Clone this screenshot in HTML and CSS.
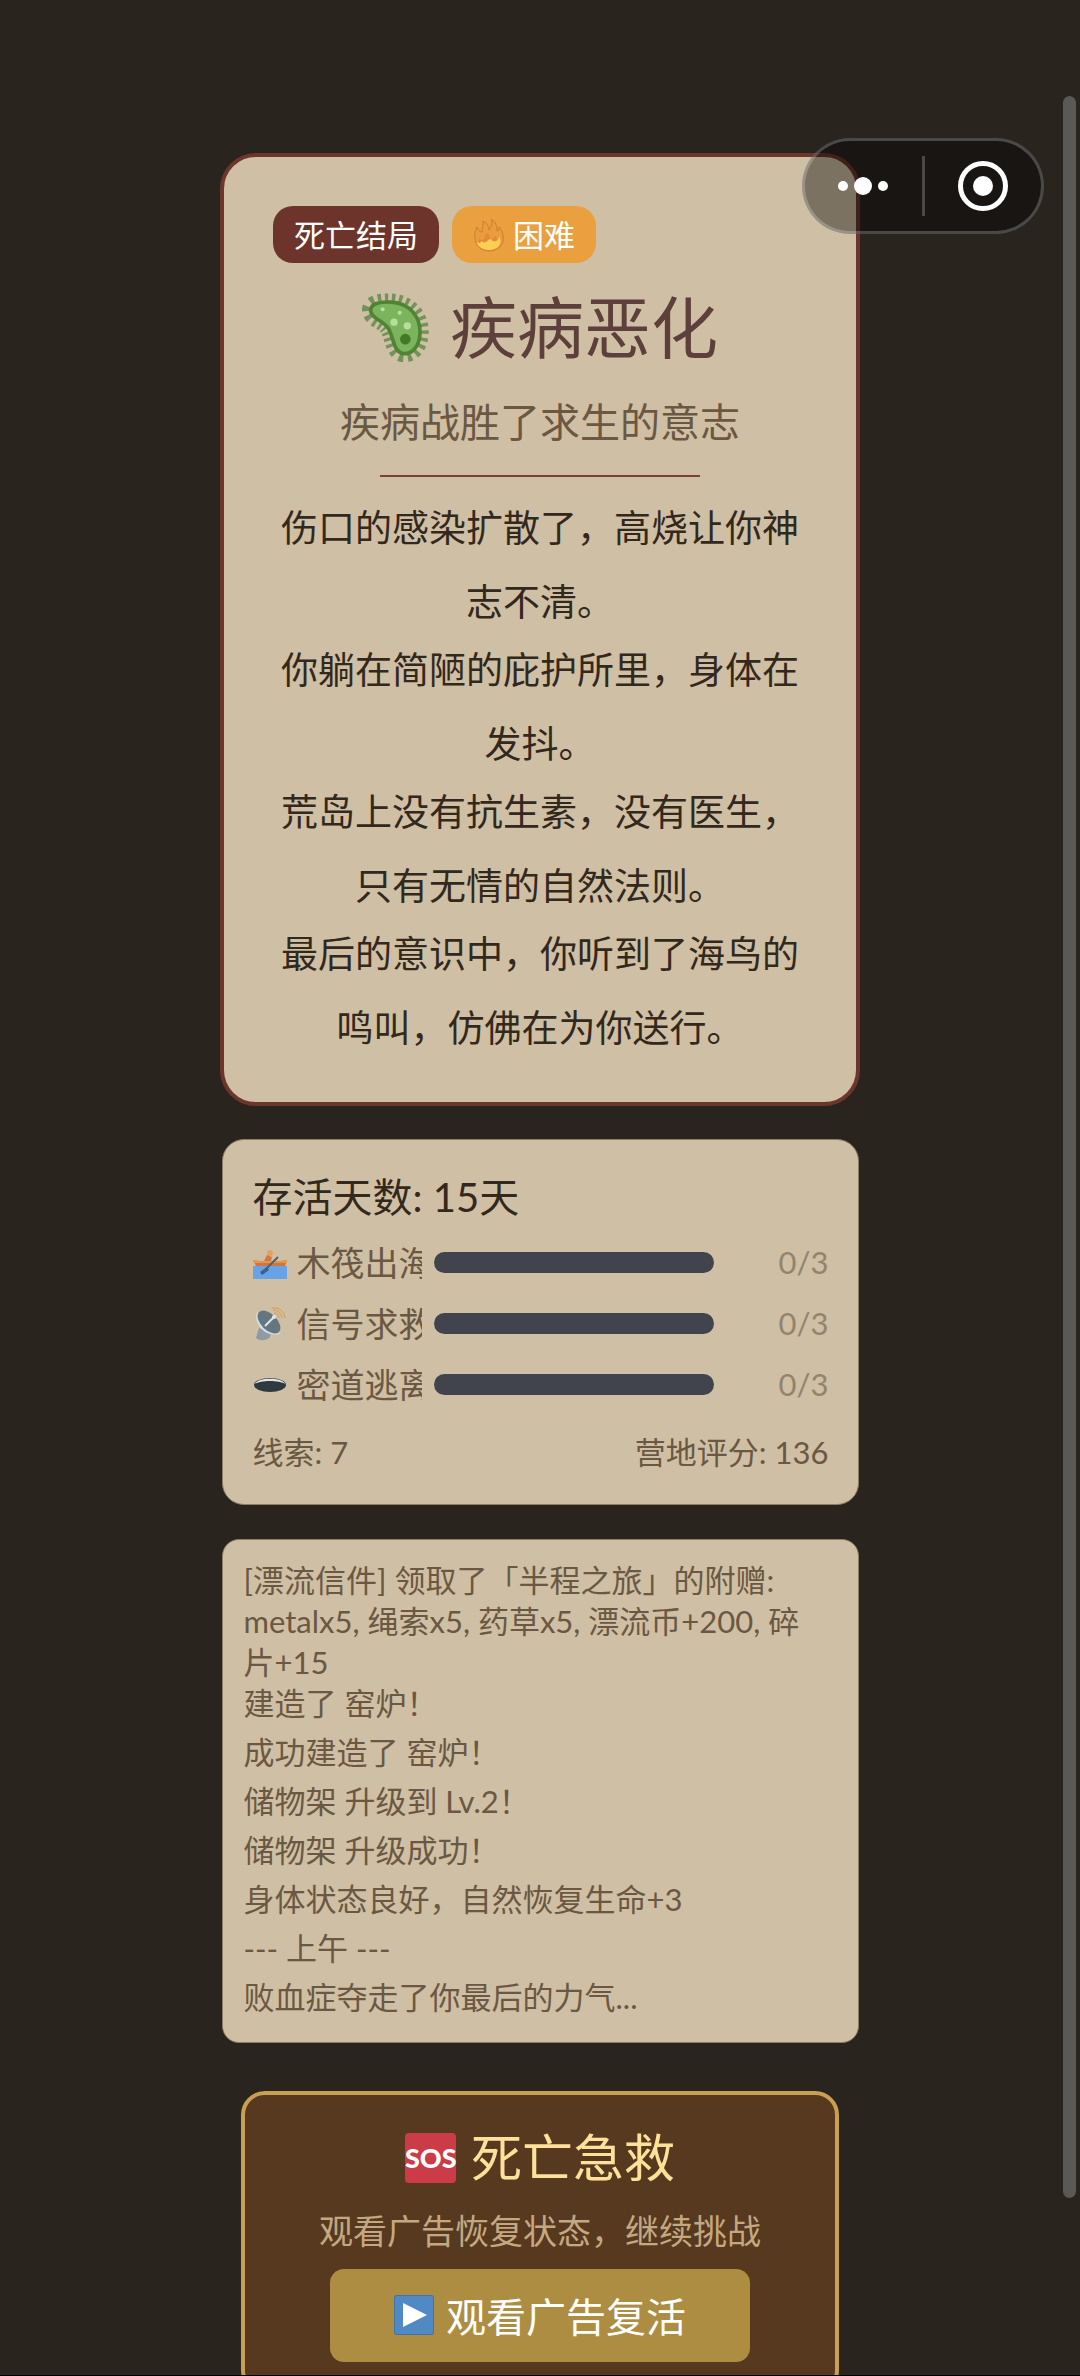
FILE: index.html
```html
<!DOCTYPE html>
<html lang="zh-CN">
<head>
<meta charset="utf-8">
<meta name="viewport" content="width=device-width, initial-scale=1">
<title>疾病恶化</title>
<link rel="stylesheet" href="styles.css">
</head>
<body>
<div class="app">
  <main class="screen">
    <article class="card ending">
      <div class="badges">
        <span class="badge badge-death">死亡结局</span>
        <span class="badge badge-hard">
          <svg class="badge-icon" viewBox="0 0 31 34" aria-hidden="true">
            <path d="M2 20C1 15 3 12 4 9c1 3 3 5 5 5C9 9 11 5 10 3c4 2 6 6 6 9 2-3 4-7 2-11 5 3 6 7 6 12 2 0 2-2 2-4 3 3 5 9 4 14-1 6-7 10-14 10S2 28 2 20z" fill="#e99d3f" stroke="#c98034" stroke-width="1"/>
            <path d="M9 22c2 0 2-4 5-7 3 2 3 6 5 6 2-1 2-3 4-3 1 4 2 8-1 11-4 3-11 3-14 0-2-2-3-6-2-10 1 1 1 3 3 3z" fill="#e58b35"/>
            <path d="M4 24c2 2 4 1 4-1 2 1 3 2 5 1 2-2 3-3 5-3 1 2 3 3 5 2 2 0 3-3 3-5 2 4 2 8-1 11-5 4-13 4-18 0-2-1-3-3-3-5z" fill="#fbcf55"/>
          </svg>困难</span>
      </div>
      <h1 class="ending-title">
        <svg class="title-icon" viewBox="36 36 204 212" aria-hidden="true">
          <path d="M62 92C60 70 90 64 125 66C180 70 212 110 210 160C208 200 185 224 158 220C132 214 132 180 118 150C105 120 64 118 62 92Z" fill="none" stroke="#74925c" stroke-width="52" stroke-dasharray="9 10"/>
          <path d="M62 92C60 70 90 64 125 66C180 70 212 110 210 160C208 200 185 224 158 220C132 214 132 180 118 150C105 120 64 118 62 92Z" fill="#7cb35d" stroke="#4f8433" stroke-width="11"/>
          <circle cx="98" cy="87" r="6" fill="#b5e09b"/>
          <circle cx="149" cy="98" r="6" fill="#b5e09b"/>
          <circle cx="132" cy="126" r="11" fill="#b5e09b"/>
          <circle cx="172" cy="137" r="11" fill="#b5e09b"/>
          <circle cx="166" cy="177" r="16" fill="#427a27"/>
        </svg>疾病恶化</h1>
      <p class="ending-subtitle">疾病战胜了求生的意志</p>
      <hr class="divider">
      <div class="story">
        <p>伤口的感染扩散了，高烧让你神志不清。</p>
        <p>你躺在简陋的庇护所里，身体在发抖。</p>
        <p>荒岛上没有抗生素，没有医生，只有无情的自然法则。</p>
        <p>最后的意识中，你听到了海鸟的鸣叫，仿佛在为你送行。</p>
      </div>
    </article>

    <section class="card panel stats">
      <h2 class="stats-title">存活天数: 15天</h2>
      <div class="routes">
        <div class="route">
          <label class="route-label" for="route-raft">
            <svg class="route-icon" viewBox="0 0 34 34" aria-hidden="true">
              <path d="M0 20h34v13H0z" fill="#68a3e5"/>
              <path d="M0 14c10 2 22 2 34 0l-2 6H3z" fill="#cf7640"/>
              <path d="M0 14c10 2 22 2 34 0v3H1z" fill="#e8944c"/>
              <circle cx="17" cy="7" r="3" fill="#e8a05c"/>
              <path d="M11 15l3-6 5 2-1 4z" fill="#d6763e"/>
              <path d="M25 11L13 23" stroke="#51606f" stroke-width="2"/>
              <path d="M14 21l-7 5 2 3 7-5z" fill="#38618d"/>
            </svg><span>木筏出海</span></label>
          <progress class="route-bar" id="route-raft" value="0" max="3"></progress>
          <span class="route-count">0/3</span>
        </div>
        <div class="route">
          <label class="route-label" for="route-signal">
            <svg class="route-icon" viewBox="0 0 34 34" aria-hidden="true">
              <path d="M6 21l-3 10c3 3 11 3 14-1l1-5z" fill="#8e9ba5"/>
              <path d="M4 5C0 15 11 31 27 27z" fill="#d3dde6"/>
              <ellipse cx="16" cy="15" rx="14" ry="8" transform="rotate(45 16 15)" fill="#667680"/>
              <path d="M12 19l9-9" stroke="#dfe6ea" stroke-width="2"/>
              <circle cx="21" cy="10" r="2" fill="#dfe6ea"/>
              <path d="M21 6c3 0 5 2 5 5M20 3c5 0 8 3 9 8M19 1c7-1 12 3 13 10" fill="none" stroke="#dd9a45" stroke-width="1"/>
            </svg><span>信号求救</span></label>
          <progress class="route-bar" id="route-signal" value="0" max="3"></progress>
          <span class="route-count">0/3</span>
        </div>
        <div class="route">
          <label class="route-label" for="route-tunnel">
            <svg class="route-icon" viewBox="0 0 34 34" aria-hidden="true">
              <ellipse cx="17" cy="17" rx="16" ry="7" fill="#303940"/>
              <path d="M2 16c2-7 28-7 30 0-5-4-25-4-30 0z" fill="#dfe5e8"/>
            </svg><span>密道逃离</span></label>
          <progress class="route-bar" id="route-tunnel" value="0" max="3"></progress>
          <span class="route-count">0/3</span>
        </div>
      </div>
      <div class="stats-footer">
        <span>线索: 7</span>
        <span>营地评分: 136</span>
      </div>
    </section>

    <section class="card panel log">
      <p class="log-long">[漂流信件] 领取了「半程之旅」的附赠: metalx5, 绳索x5, 药草x5, 漂流币+200, 碎片+15</p>
      <ul class="log-list">
        <li>建造了 窑炉！</li>
        <li>成功建造了 窑炉！</li>
        <li>储物架 升级到 Lv.2！</li>
        <li>储物架 升级成功！</li>
        <li>身体状态良好，自然恢复生命+3</li>
        <li>--- 上午 ---</li>
        <li>败血症夺走了你最后的力气...</li>
      </ul>
    </section>

    <section class="rescue">
      <h2 class="rescue-title"><span class="sos">SOS</span>死亡急救</h2>
      <p class="rescue-text">观看广告恢复状态，继续挑战</p>
      <button class="rescue-button" type="button">
        <svg class="play-icon" viewBox="0 0 40 40" aria-hidden="true">
          <rect width="40" height="40" rx="3" fill="#3f74ab"/>
          <rect x="1" y="1" width="38" height="38" rx="2" fill="#5089c4"/>
          <path d="M9 8l24 12L9 32z" fill="#fff"/>
        </svg>观看广告复活</button>
    </section>
  </main>

  <div class="capsule">
    <button class="capsule-button" type="button" aria-label="更多">
      <svg class="dots" viewBox="0 0 52 20" aria-hidden="true">
        <circle cx="6" cy="10" r="5"/><circle cx="26" cy="10" r="9"/><circle cx="46" cy="10" r="5"/>
      </svg>
    </button>
    <button class="capsule-button capsule-close" type="button" aria-label="关闭">
      <svg class="ring" viewBox="0 0 50 50" aria-hidden="true">
        <circle cx="25" cy="25" r="22.500" fill="none" stroke="#fff" stroke-width="5"/>
        <circle cx="25" cy="25" r="10"/>
      </svg>
    </button>
  </div>
  <div class="scroll-thumb"></div>
</div>
</body>
</html>
```
FILE: styles.css
```css
* {
  box-sizing: border-box;
}

body,
h1,
h2,
p,
ul {
  margin: 0;
  padding: 0;
  font-weight: 400;
}

body {
  background: #29241e;
  color: #33281c;
  font-family: Lato, "Noto Sans CJK SC", sans-serif;
}

button {
  border: 0;
  padding: 0;
  background: none;
  font: inherit;
  color: #fff;
  cursor: pointer;
}

.app {
  position: relative;
  height: 100vh;
  overflow: hidden;
  border-bottom: 1px solid #000;
}

.screen {
  display: flex;
  flex-direction: column;
  align-items: center;
  padding-top: 153px;
}

.card {
  width: 100%;
  background: #cfbfa4;
}

/* Ending card */
.ending {
  max-width: 640px;
  padding: 49px 49px 37px;
  border: 4px solid #6d362c;
  border-radius: 36px;
  text-align: center;
}

.badges {
  display: flex;
  gap: 13px;
}

.badge {
  display: flex;
  align-items: center;
  height: 57px;
  padding: 0 21px;
  border-radius: 20px;
  color: #fff;
  font-size: 31px;
  line-height: 56px;
}

.badge-death {
  background: #6d342b;
}

.badge-hard {
  background: #eaa03e;
}

.badge-icon {
  width: 31px;
  height: 34px;
  margin-right: 9px;
}

.ending-title {
  display: flex;
  align-items: center;
  justify-content: center;
  gap: 20px;
  margin-top: 20px;
  color: #5d403b;
  font-size: 67px;
  line-height: 88px;
}

.title-icon {
  width: 68px;
  height: 71px;
}

.ending-subtitle {
  margin-top: 23px;
  color: #6a5842;
  font-size: 40px;
  line-height: 56px;
}

.divider {
  width: 60%;
  max-width: 320px;
  height: 2px;
  margin: 25px auto 14px;
  border: 0;
  background: #7a4032;
}

.story p {
  font-size: 37px;
  line-height: 74px;
}

.story p + p {
  margin-top: -6px;
}

/* Panels */
.panel {
  max-width: 637px;
  border: 1px solid #8d7d66;
}

.stats {
  margin-top: 33px;
  padding: 30px 29px 30px 30px;
  border-radius: 22px;
}

.stats-title {
  font-size: 40px;
  line-height: 54px;
}

.routes {
  display: grid;
  gap: 10px;
  margin-top: 13px;
}

.route {
  display: flex;
  align-items: center;
  height: 51px;
  font-size: 34px;
  line-height: 51px;
}

.route-label {
  display: flex;
  align-items: center;
  gap: 10px;
  width: 169px;
  margin-right: 12px;
  overflow: hidden;
  color: #6a5842;
  white-space: nowrap;
}

.route-icon {
  flex: none;
  width: 34px;
  height: 34px;
}

.route-bar {
  width: 280px;
  height: 21px;
  appearance: none;
  border: 0;
  border-radius: 11px;
  overflow: hidden;
  background: #41444d;
}

.route-bar::-webkit-progress-bar {
  background: #41444d;
}

.route-bar::-webkit-progress-value {
  background: #c9a050;
}

.route-count {
  margin-left: auto;
  color: #94846c;
  font-size: 31px;
}

.stats-footer {
  display: flex;
  justify-content: space-between;
  margin-top: 20px;
  color: #6a5842;
  font-size: 31px;
  line-height: 44px;
}

.log {
  margin-top: 34px;
  padding: 20px 36px 24px 21px;
  border-radius: 17px;
  color: #6a5842;
  font-size: 31px;
  line-height: 41px;
}

.log-list {
  display: grid;
  gap: 8px;
  list-style: none;
}

/* Rescue offer */
.rescue {
  display: flex;
  flex-direction: column;
  align-items: center;
  width: 100%;
  max-width: 598px;
  margin-top: 48px;
  padding: 28px 20px;
  border: 4px solid #c99f50;
  border-radius: 24px;
  background: #56391e;
}

.rescue-title {
  display: flex;
  align-items: center;
  gap: 15px;
  color: #fde09a;
  font-size: 51px;
  line-height: 70px;
}

.sos {
  width: 51px;
  height: 50px;
  border-radius: 4px;
  background: #cb3c48;
  color: #fff;
  font-size: 27px;
  font-weight: 900;
  line-height: 50px;
  text-align: center;
}

.rescue-text {
  margin-top: 15px;
  color: #c4a882;
  font-size: 34px;
  line-height: 46px;
}

.rescue-button {
  display: flex;
  align-items: center;
  justify-content: center;
  gap: 12px;
  width: 100%;
  max-width: 420px;
  height: 93px;
  margin-top: 15px;
  padding-bottom: 2px;
  border-radius: 14px;
  background: #ad8d42;
  font-size: 40px;
}

.play-icon {
  width: 40px;
  height: 40px;
}

/* Host app controls floating above the page */
.capsule {
  position: absolute;
  top: 138px;
  right: 36px;
  display: flex;
  align-items: center;
  width: 242px;
  height: 96px;
  border: 3px solid rgba(255, 255, 255, 0.22);
  border-radius: 48px;
  background: rgba(0, 0, 0, 0.4);
}

.capsule-button {
  display: flex;
  flex: 1;
  align-items: center;
  justify-content: center;
  height: 60px;
  fill: #fff;
}

.capsule-close {
  border-left: 3px solid #4c4844;
}

.dots {
  width: 52px;
  height: 20px;
}

.ring {
  width: 50px;
  height: 50px;
}

.scroll-thumb {
  position: absolute;
  top: 96px;
  right: 4px;
  bottom: 177px;
  width: 13px;
  border-radius: 7px;
  background: #5b5955;
}
```
